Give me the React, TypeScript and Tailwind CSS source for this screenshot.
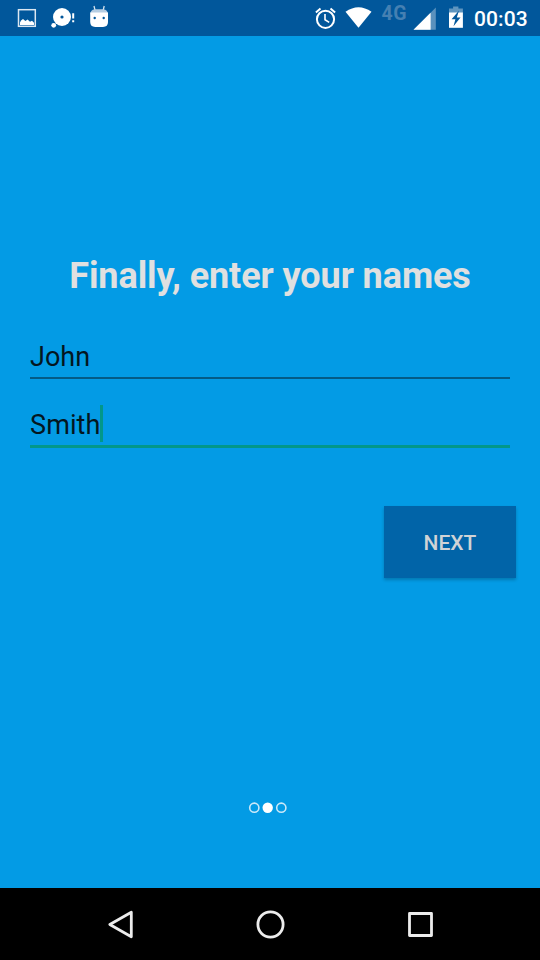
import React from "react";

function NotificationIcons() {
  return (
    <div className="flex h-full items-center">
      <svg width="36" height="36" viewBox="0 0 36 36" className="ml-2">
        <rect x="10.5" y="9.7" width="16.8" height="16.6" fill="none" stroke="#dbe7f1" strokeWidth="1.5" />
        <path d="M12 25v-2.6l1-2 2-1.4 2.4 2 2.2-1.6 2.4 2.4 2-1 2 2V25z" fill="#fff" />
      </svg>
      <svg width="36" height="36" viewBox="44 0 36 36">
        <circle cx="62" cy="17" r="9" fill="#fff" />
        <circle cx="62" cy="17" r="1.6" fill="#01579b" />
        <circle cx="53.7" cy="25.3" r="2.4" fill="#fff" />
        <path d="M72.2 13.2h2v5.4h-2zM72.2 20.2h2v2h-2z" fill="#fff" />
      </svg>
      <svg width="38" height="36" viewBox="80 0 38 36">
        <path d="M94 6l1.2 5M104.2 6l-1.2 5" stroke="#d5e3ee" strokeWidth="1.3" />
        <path d="M90.3 13.2q.8-3.6 4.2-4h9.2q3.4.4 4.2 4z" fill="#b5cde2" />
        <path d="M90.2 12.6h17.8V22q0 4.9-5 4.9h-7.8q-5 0-5-4.9z" fill="#fff" />
        <circle cx="94.7" cy="18" r="1.2" fill="#01579b" />
        <circle cx="103.7" cy="18" r="1.2" fill="#01579b" />
      </svg>
    </div>
  );
}

function SystemIcons() {
  return (
    <div className="flex h-full items-center">
      <svg width="32" height="36" viewBox="310 0 32 36" fill="none" stroke="#fff">
        <circle cx="325.5" cy="19.3" r="8.6" strokeWidth="2" />
        <path d="M325 14v5.8l4.2 2.6" strokeWidth="1.6" />
        <path d="M315.9 12.4l4.6-3.8M335.1 12.4l-4.6-3.8" strokeWidth="2" />
      </svg>
      <svg width="36" height="36" viewBox="342 0 36 36">
        <path d="M345.5 11.8Q358.5 2.5 371.5 11.8L358.5 27.8z" fill="#fff" />
      </svg>
      <span className="-mt-[9px] w-[34px] pl-[3.5px] font-[Roboto,sans-serif] text-[19.5px] leading-none font-bold tracking-[0.6px] text-[#4580b2]">4G</span>
      <svg width="26" height="36" viewBox="412 0 26 36">
        <path d="M413.5 29.8L435.8 7.5v22.3z" fill="#5a91bd" />
        <path d="M413.5 29.8L430.6 12.7v17.1z" fill="#fff" />
      </svg>
      <svg width="36" height="36" viewBox="438 0 36 36">
        <path d="M449 13V8.6h4.1V6.5h5.3v2.1h4.5V13z" fill="#5f95bf" />
        <path d="M449 12.5h13.9v15.3H449z" fill="#fff" />
        <path d="M459 10.5l-7.4 8.7h3.8l-1.9 7 7-8.7h-3.7z" fill="#01579b" />
      </svg>
      <time className="w-[66px] pt-[2px] font-[Roboto,sans-serif] text-[21px] leading-none font-medium tracking-[0.1px] text-white">00:03</time>
    </div>
  );
}

export default function App() {
  return (
    <div className="flex h-[960px] w-[540px] flex-col overflow-hidden bg-[#039be5] font-[Roboto,sans-serif]">
      <header className="flex h-9 shrink-0 items-center justify-between bg-[#01579b]">
        <NotificationIcons />
        <SystemIcons />
      </header>

      <main className="flex flex-1 flex-col">
        <h1 className="mt-[219px] text-center text-[36px] leading-[42px] font-bold tracking-[-0.08px] whitespace-nowrap text-[#e0e0e0]">
          Finally, enter your names
        </h1>
        <div className="mx-[30px] mt-10 h-[42px] border-b-2 border-[#045b86] text-[27px] leading-[40px] text-[#04161f]">John</div>
        <div className="mx-[30px] mt-[26px] flex h-[43px] border-b-3 border-[#029789] text-[27px] leading-[40px] text-[#04161f]">
          <span className="w-[70px] tracking-[0.1px]">Smith</span>
          <span className="h-[37px] w-[3px] bg-[#029789]" />
        </div>
        <button className="mt-[58px] mr-6 h-[72px] w-[132px] self-end bg-[#0164a8] pt-[3px] text-[21px] font-medium text-[#d0d3d6] shadow-[0_2px_3px_rgba(0,0,0,0.22)]">
          NEXT
        </button>
        <svg width="42" height="14" viewBox="247 801 42 14" className="mt-[223px] ml-[247px]">
          <circle cx="254.3" cy="807.7" r="4.6" fill="none" stroke="#cbe8f8" strokeWidth="1.6" />
          <circle cx="267.7" cy="807.7" r="5.2" fill="#fff" />
          <circle cx="281.3" cy="807.7" r="4.6" fill="none" stroke="#cbe8f8" strokeWidth="1.6" />
        </svg>
      </main>

      <nav className="h-[72px] shrink-0 bg-black">
        <svg width="540" height="72" viewBox="0 888 540 72" fill="none" stroke="#ececec" strokeWidth="2.8" strokeLinejoin="round">
          <path d="M131.3 912.2v24.6L109.8 924.5z" />
          <circle cx="270.5" cy="924.5" r="12.6" />
          <rect x="409.5" y="913.5" width="22" height="22" />
        </svg>
      </nav>
    </div>
  );
}
